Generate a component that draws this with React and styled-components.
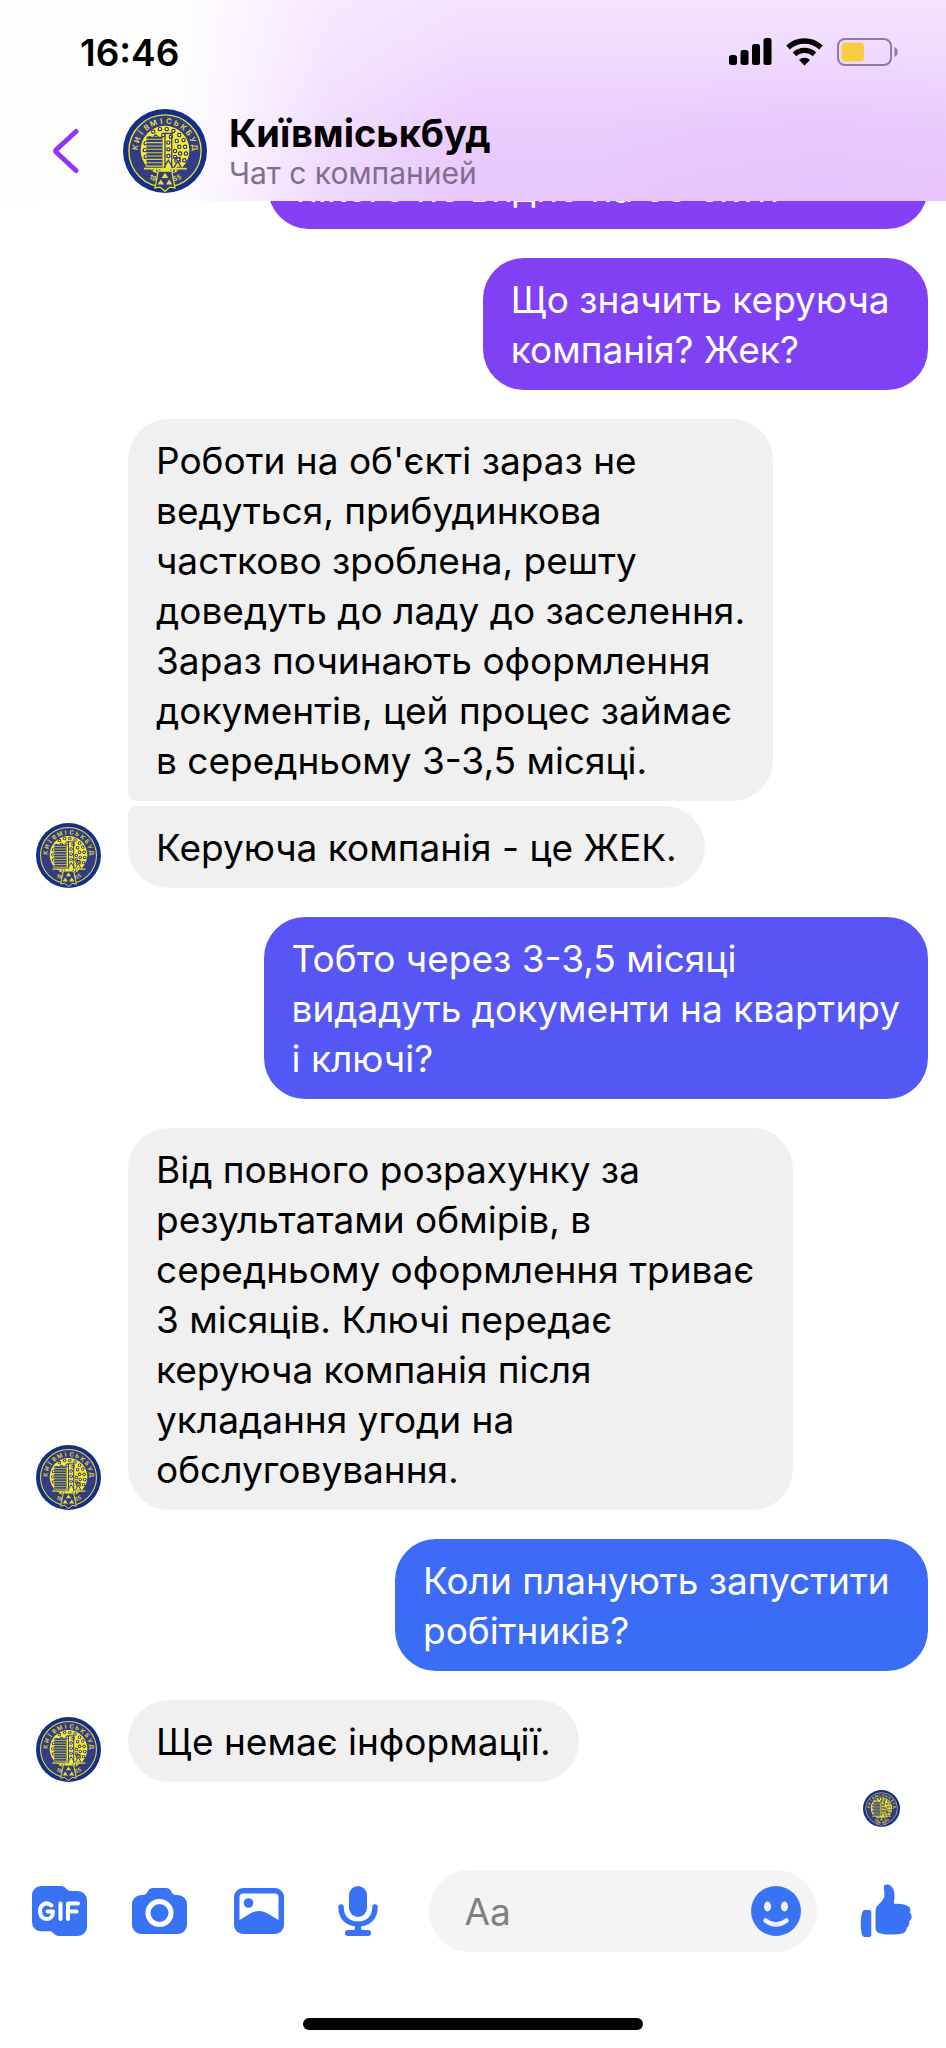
import React, { useState } from 'react';
import styled, { createGlobalStyle } from 'styled-components';

const GlobalStyle = createGlobalStyle`
* {
  box-sizing: border-box;
}
body {
  margin: 0;
  background: #fff;
  font-family: Inter, 'Liberation Sans', sans-serif;
}
`;

const Page = styled.div`
display: flex;
flex-direction: column;
height: 100vh;
`;

const Header = styled.header`
flex: none;
padding: 0 40px 8px 52px;
background:
  linear-gradient(92deg, #fcfdfc 0%, #fefefe 18%, rgba(253, 250, 255, 0.85) 25%, rgba(250, 244, 255, 0.4) 35%, rgba(248, 240, 255, 0) 50%),
  radial-gradient(240px 160px at 87% 100%, rgba(232, 186, 252, 0.4), rgba(232, 186, 252, 0)),
  linear-gradient(180deg, #f3e1fe 0%, #f0dbfe 25%, #eaccfd 65%, #e7c7fd 100%);
`;

const StatusBar = styled.div`
display: flex;
align-items: center;
justify-content: space-between;
height: 104px;
padding: 0 8px 0 28px;
`;

const Clock = styled.time`
font-size: 37px;
font-weight: 600;
`;

const StatusIcons = styled.div`
display: flex;
align-items: center;
gap: 14px;
`;

const Contact = styled.div`
display: flex;
align-items: center;
padding-top: 5px;
`;

const IconButton = styled.button`
display: flex;
flex: none;
justify-content: center;
padding: 0;
border: 0;
background: none;
color: #3873f6;
cursor: pointer;
`;

const BackButton = styled(IconButton)`
margin-right: 44px;
color: #9135f5;
`;

const ContactInfo = styled.div`
display: flex;
flex-direction: column;
margin-left: 22px;
`;

const ContactName = styled.h1`
margin: 0;
font-size: 38px;
line-height: 44px;
font-weight: 700;
`;

const ContactStatus = styled.p`
margin: 0;
font-size: 30px;
line-height: 36px;
color: #7f6f8e;
`;

const Messages = styled.main`
display: flex;
flex: 1;
flex-direction: column;
justify-content: flex-end;
gap: 29px;
min-height: 0;
padding: 0 18px 7px 36px;
overflow: hidden;
`;

const IncomingGroup = styled.div`
display: flex;
flex: none;
align-items: flex-end;
gap: 27px;
`;

const Stack = styled.div`
display: flex;
flex-direction: column;
align-items: flex-start;
gap: 5px;
`;

const Bubble = styled.p`
margin: 0;
padding: 17px 28px 15px;
border-radius: 41px;
background: #f0f0f0;
color: #000;
font-size: 37px;
line-height: 50px;
white-space: pre-wrap;

${Stack} &:not(:last-child) {
  border-bottom-left-radius: 9px;
}
${Stack} &:not(:first-child) {
  border-top-left-radius: 9px;
}
`;

const SentBubble = styled(Bubble)`
flex: none;
align-self: flex-end;
width: ${props => (props.$wide ? '74%' : 'auto')};
background: linear-gradient(${props => props.$from}, ${props => props.$to});
color: #fff;
`;

const Seen = styled.div`
display: flex;
justify-content: flex-end;
margin-top: -21px;
padding-right: 28px;
`;

const Composer = styled.form`
display: flex;
flex: none;
align-items: center;
justify-content: space-between;
margin-top: 36px;
padding: 0 34px 0 32px;
`;

const AttachButton = styled(IconButton)`
width: 56px;
`;

const InputBox = styled.div`
display: flex;
width: 44%;
align-items: center;
height: 82px;
padding: 0 16px 0 35px;
border-radius: 41px;
background: #f4f4f4;
`;

const TextInput = styled.input`
flex: 1;
width: 100%;
min-width: 0;
padding: 0;
border: 0;
outline: 0;
background: none;
font: inherit;
font-size: 37px;

&::placeholder {
  color: #7f7f7f;
  opacity: 1;
}
`;

const HomeArea = styled.div`
display: flex;
flex: none;
justify-content: center;
padding: 66px 0 18px;
`;

const HomeIndicator = styled.div`
width: 36%;
height: 12px;
border-radius: 6px;
background: #000;
`;

const SignalIcon = () => (
  <svg width="43" height="28" viewBox="0 0 43 28" fill="#000" aria-hidden="true">
    <rect x="0" y="17" width="8" height="10" rx="2.5" />
    <rect x="11.5" y="12" width="8" height="15" rx="2.5" />
    <rect x="23" y="6" width="8" height="21" rx="2.5" />
    <rect x="34.5" y="0" width="8" height="27" rx="2.5" />
  </svg>
);

const WifiIcon = () => (
  <svg width="37" height="28" viewBox="0 0 37 28" aria-hidden="true">
    <path d="M2 9.5a24 24 0 0 1 33 0" fill="none" stroke="#000" strokeWidth="5.4" />
    <path d="M8.6 16.4a14.4 14.4 0 0 1 19.8 0" fill="none" stroke="#000" strokeWidth="5.2" />
    <path d="M13 22a8 8 0 0 1 11 0l-5.5 5.4z" fill="#000" />
  </svg>
);

const BatteryIcon = () => (
  <svg width="61" height="28" viewBox="0 0 61 28" aria-hidden="true">
    <rect x="1" y="1" width="53" height="26" rx="7" fill="none" stroke="#8d7c9f" strokeWidth="2" />
    <rect x="4.5" y="4.5" width="22.5" height="19" rx="4" fill="#f7cd46" />
    <path d="M57.5 9c2 .8 3.2 2.6 3.2 5s-1.2 4.2-3.2 5z" fill="#8d7c9f" />
  </svg>
);

const BackIcon = () => (
  <svg width="27" height="46" viewBox="0 0 27 46" fill="none" stroke="currentColor" strokeWidth="5" strokeLinecap="round" strokeLinejoin="round">
    <path d="M24 3.5L4.5 21.5q-1.5 1.5 0 3L24 42.5" />
  </svg>
);

const dots = [
  [36, 27], [44, 24], [52, 24], [60, 26], [67, 31], [32, 35], [39, 33], [48, 31], [57, 33], [64, 38],
  [72, 37], [74, 45], [67, 45], [75, 53], [68, 53], [62, 50], [73, 61], [66, 60], [54, 40], [54, 48],
  [54, 56], [62, 57], [27, 41], [26, 49], [27, 57], [34, 71], [42, 73], [59, 73], [66, 71],
];

const ringLetters = 'КИЇВМІСЬКБУД'.split('');

const Emblem = ({ size }) => (
  <svg width={size} height={size} viewBox="0 0 100 100" role="img" aria-label="Київміськбуд">
    <circle cx="50" cy="50" r="50" fill="#122f8b" />
    <circle cx="50" cy="50" r="43" fill="#343c85" stroke="#e6e12e" strokeWidth="1.6" />
    <circle cx="50" cy="49" r="29" fill="#f2ea35" />
    {dots.map(([x, y]) => (
      <g key={`${x}-${y}`}>
        <circle cx={x} cy={y} r="2.6" fill="#272646" />
        <circle cx={x} cy={y} r="1.3" fill="#fffbe0" />
      </g>
    ))}
    <rect x="28" y="33" width="19" height="38" fill="#343c85" />
    <path d="M27 36h20M27 40h20M27 44h20M27 48h20M27 52h20M27 56h20M27 60h20M27 64h20M27 68h20" stroke="#d8d536" strokeWidth="1.3" />
    <path d="M50 29v42M58 29v42M48 29h12M48 71l6-10 6 10 5-9 5 9M62 64v-6h6v6" fill="none" stroke="#343c85" strokeWidth="1.5" />
    <path d="M25 71h51" stroke="#e6e12e" strokeWidth="2" />
    <path d="M42 74L38 94l6-1 6 5 6-5 6 1-4-20z" fill="#343c85" stroke="#e6e12e" strokeWidth="1.5" />
    <path d="M50 76l-4 6h8zM45 84l-4 6h8zM55 84l-4 6h8z" fill="#e6e12e" />
    <g fill="#e6e12e" fontSize="9" fontWeight="600" textAnchor="middle">
      {ringLetters.map((letter, i) => (
        <text key={i} x="50" y="17.5" transform={`rotate(${-83 + i * 15.1} 50 50)`}>{letter}</text>
      ))}
      <text x="50" y="88" fontSize="8" transform="rotate(24 50 50)">19</text>
      <text x="50" y="88" fontSize="8" transform="rotate(-24 50 50)">55</text>
    </g>
  </svg>
);

const GifIcon = () => (
  <svg width="56" height="52" viewBox="0 0 56 52" aria-hidden="true">
    <path d="M9 1h19c4 0 5 1.5 7.5 3.7 1 .8 2 1.3 3.5 1.3h7a9 9 0 0 1 9 9v27a9 9 0 0 1-9 9H28c-4 0-5-1.5-7.5-3.5-1-.9-2-1.2-3.5-1.2H9a9 9 0 0 1-9-9V10a9 9 0 0 1 9-9z" fill="currentColor" />
    <g fill="none" stroke="#fff" strokeWidth="4" strokeLinecap="round" strokeLinejoin="round">
      <path d="M19.5 20.5c-5-4.5-11.5-1-11.5 5.5s4.5 8 7 8 6-2 6-7.5h-5.5" />
      <path d="M28.5 18.5v15.5M36 34V18.5h10M36 26.5h8.5" />
    </g>
  </svg>
);

const CameraIcon = () => (
  <svg width="56" height="52" viewBox="0 0 56 52" aria-hidden="true">
    <path d="M22 3h13c2.5 0 4 1 5 3 1.3 2.6 2.5 4 5 4h2a9 9 0 0 1 9 9v21a9 9 0 0 1-9 9H10a9 9 0 0 1-9-9V19a9 9 0 0 1 9-9h2c2.5 0 4-1.4 5-4 1-2 2.5-3 5-3z" fill="currentColor" />
    <circle cx="28.5" cy="28" r="11.5" fill="none" stroke="#fff" strokeWidth="5" />
  </svg>
);

const PhotoIcon = () => (
  <svg width="52" height="52" viewBox="0 0 52 52" aria-hidden="true">
    <rect x="1" y="3" width="50" height="46" rx="9" fill="currentColor" />
    <path d="M10 8.5h32a3.5 3.5 0 0 1 3.5 3.5v23c-7-3.5-12-9-19.5-9s-12.5 5.5-19.5 9V12a3.5 3.5 0 0 1 3.5-3.5z" fill="#fff" />
    <circle cx="15.5" cy="18" r="4.8" fill="currentColor" />
  </svg>
);

const MicIcon = () => (
  <svg width="42" height="52" viewBox="0 0 42 52" aria-hidden="true">
    <rect x="12" y="1" width="18" height="31" rx="9" fill="currentColor" />
    <path d="M4 22c0 11 7 17 17 17s17-6 17-17" fill="none" stroke="currentColor" strokeWidth="5.5" strokeLinecap="round" />
    <path d="M18 38h6v4.5c0 2 .7 2.5 2 2.5h5c2 0 3 1 3 3s-1 3-3 3H11c-2 0-3-1-3-3s1-3 3-3h5c1.3 0 2-.5 2-2.5z" fill="currentColor" />
  </svg>
);

const SmileIcon = () => (
  <svg width="50" height="50" viewBox="0 0 50 50" aria-hidden="true">
    <circle cx="25" cy="25" r="25" fill="currentColor" />
    <ellipse cx="16.5" cy="20.5" rx="3.5" ry="5" fill="#f4f4f4" />
    <ellipse cx="33.5" cy="20.5" rx="3.5" ry="5" fill="#f4f4f4" />
    <path d="M14.5 34.5q10.5 8 21 0" fill="none" stroke="#f4f4f4" strokeWidth="4.5" strokeLinecap="round" />
  </svg>
);

const LikeIcon = () => (
  <svg width="52" height="54" viewBox="0 0 52 54" aria-hidden="true">
    <path d="M4.5 26h4.5c1.5 0 2.3.8 2.3 2.3v22.4c0 1.5-.8 2.3-2.3 2.3H4.5C2 53 .8 47 .8 40S2 26 4.5 26z" fill="currentColor" />
    <path d="M26.5.5c5 0 8 4.5 8 10.5 0 3.5-.5 6-.5 8.700 9-.2 16.5 1.8 16.5 5.8 0 1.2-.4 2-.9 3 1.4 1 2 2.4 2 4.2 0 2-.8 3.4-2.4 4.5.5 2.8-.4 5-2.4 6.5.2 5.3-5 6.8-15.8 6.8-10 0-15.5-1.5-15.5-6V27c0-7 9-9 9-16.5 0-3-.6-5-.6-7.500 0-1.700.9-2.5 2.6-2.5z" fill="currentColor" />
  </svg>
);

const App = () => {
  const [text, setText] = useState('');

  return (
    <Page>
      <GlobalStyle />
      <Header>
        <StatusBar>
          <Clock>16:46</Clock>
          <StatusIcons>
            <SignalIcon />
            <WifiIcon />
            <BatteryIcon />
          </StatusIcons>
        </StatusBar>
        <Contact>
          <BackButton type="button" aria-label="Назад"><BackIcon /></BackButton>
          <Emblem size={84} />
          <ContactInfo>
            <ContactName>Київміськбуд</ContactName>
            <ContactStatus>Чат с компанией</ContactStatus>
          </ContactInfo>
        </Contact>
      </Header>

      <Messages>
        <SentBubble $wide $from="#8540f5" $to="#8540f5">нікого не видно на об'єкті?</SentBubble>
        <SentBubble $from="#8240f5" $to="#7d42f5">{'Що значить керуюча \nкомпанія? Жек?'}</SentBubble>
        <IncomingGroup>
          <Emblem size={65} />
          <Stack>
            <Bubble>{"Роботи на об'єкті зараз не \nведуться, прибудинкова \nчастково зроблена, решту \nдоведуть до ладу до заселення.\nЗараз починають оформлення \nдокументів, цей процес займає \nв середньому 3-3,5 місяці."}</Bubble>
            <Bubble>Керуюча компанія - це ЖЕК.</Bubble>
          </Stack>
        </IncomingGroup>
        <SentBubble $from="#5a54f5" $to="#5159f6">{'Тобто через 3-3,5 місяці \nвидадуть документи на квартиру\nі ключі?'}</SentBubble>
        <IncomingGroup>
          <Emblem size={65} />
          <Bubble>{'Від повного розрахунку за \nрезультатами обмірів, в \nсередньому оформлення триває \n3 місяців. Ключі передає \nкеруюча компанія після \nукладання угоди на \nобслуговування.'}</Bubble>
        </IncomingGroup>
        <SentBubble $from="#3d69f6" $to="#3a6ef7">{'Коли планують запустити \nробітників?'}</SentBubble>
        <IncomingGroup>
          <Emblem size={65} />
          <Bubble>Ще немає інформації.</Bubble>
        </IncomingGroup>
        <Seen><Emblem size={37} /></Seen>
      </Messages>

      <Composer onSubmit={e => e.preventDefault()}>
        <AttachButton type="button" aria-label="GIF"><GifIcon /></AttachButton>
        <AttachButton type="button" aria-label="Камера"><CameraIcon /></AttachButton>
        <AttachButton type="button" aria-label="Фото"><PhotoIcon /></AttachButton>
        <AttachButton type="button" aria-label="Микрофон"><MicIcon /></AttachButton>
        <InputBox>
          <TextInput aria-label="Сообщение" placeholder="Aa" value={text} onChange={e => setText(e.target.value)} />
          <IconButton type="button" aria-label="Эмодзи"><SmileIcon /></IconButton>
        </InputBox>
        <IconButton type="button" aria-label="Нравится"><LikeIcon /></IconButton>
      </Composer>
      <HomeArea><HomeIndicator /></HomeArea>
    </Page>
  );
};

export default App;
